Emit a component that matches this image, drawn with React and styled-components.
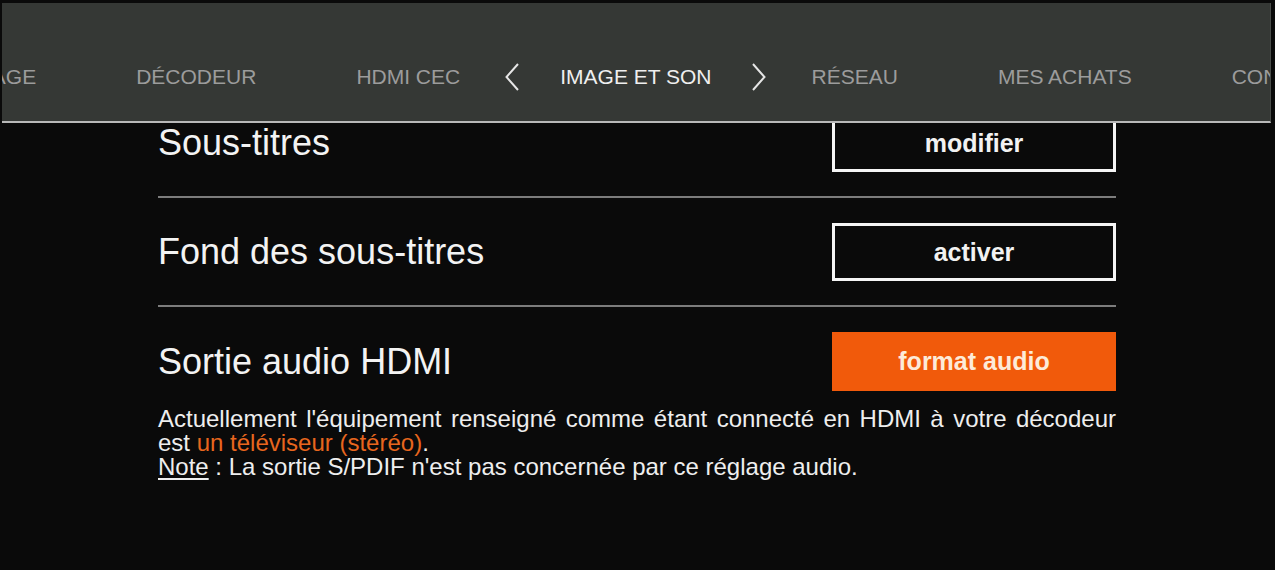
import React from "react";
import styled, { createGlobalStyle } from "styled-components";

const GlobalStyle = createGlobalStyle`
  html, body { margin: 0; padding: 0; background: #0a0a0a; }
  body { font-family: "Liberation Sans", Arial, sans-serif; }
  * { box-sizing: border-box; }
`;

const Screen = styled.div`
  width: 1275px;
  height: 570px;
  display: flex;
  flex-direction: column;
  overflow: hidden;
  background: #0a0a0a;
  padding-top: 3px;
`;

const Header = styled.header`
  flex-shrink: 0;
  height: 120px;
  margin: 0 4px 0 2px;
  background: #353835;
  border-bottom: 2px solid #b8b8b8;
  border-right: 1px solid #4a4d4a;
  overflow: hidden;
  display: flex;
  align-items: center;
  padding-top: 28px;
`;

const TabStrip = styled.nav`
  display: flex;
  align-items: center;
  gap: 100px;
  margin-left: -86px;
  flex-shrink: 0;
`;

const Tab = styled.span`
  position: relative;
  font-size: 21px;
  line-height: 1;
  white-space: nowrap;
  color: ${(p) => (p.$active ? "#efefef" : "#9c9c9c")};
`;

const Chevron = styled.svg`
  position: absolute;
  top: 50%;
  margin-top: -13px;
  width: 14px;
  height: 28px;
  ${(p) => (p.$side === "left" ? "left: -55px;" : "right: -54px;")}
`;

const Viewport = styled.main`
  flex: 1;
  overflow: hidden;
`;

const List = styled.div`
  width: 958px;
  margin: -34px 0 0 158px;
`;

const Row = styled.div`
  display: flex;
  align-items: center;
  justify-content: space-between;
  padding: 25px 0 ${(p) => (p.$last ? "0" : "24px")};
  border-bottom: ${(p) => (p.$last ? "none" : "2px solid #7c7c7c")};
`;

const Label = styled.span`
  font-size: 36px;
  line-height: 1;
  color: #f3f3f3;
`;

const ActionButton = styled.button`
  width: 284px;
  height: ${(p) => (p.$primary ? "59px" : "58px")};
  padding: 0;
  font-family: "Liberation Sans", Arial, sans-serif;
  font-weight: bold;
  font-size: 25px;
  border: 3px solid ${(p) => (p.$primary ? "#f15a0b" : "#f5f5f5")};
  background: ${(p) => (p.$primary ? "#f15a0b" : "transparent")};
  color: ${(p) => (p.$primary ? "#fdebd9" : "#f2f2f2")};
  cursor: pointer;
`;

const Description = styled.p`
  margin: 16px 0 0;
  font-size: 24px;
  line-height: 24px;
  color: #eeeeee;
  text-align: justify;
`;

const Highlight = styled.span`
  color: #e8661e;
`;

const NoteLabel = styled.span`
  text-decoration: underline;
  text-underline-offset: 3px;
`;

const ChevronIcon = ({ side }) => (
  <Chevron $side={side} viewBox="0 0 14 28">
    <polyline
      points={side === "left" ? "13,1 1.5,14 13,27" : "1,1 12.5,14 1,27"}
      fill="none"
      stroke="#e6e6e6"
      strokeWidth="2"
    />
  </Chevron>
);

const tabs = [
  { label: "AFFICHAGE" },
  { label: "DÉCODEUR" },
  { label: "HDMI CEC" },
  { label: "IMAGE ET SON", active: true },
  { label: "RÉSEAU" },
  { label: "MES ACHATS" },
  { label: "CONTRÔLE PARENTAL" },
];

const settings = [
  { label: "Sous-titres", action: "modifier" },
  { label: "Fond des sous-titres", action: "activer" },
  { label: "Sortie audio HDMI", action: "format audio", primary: true },
];

export default function App() {
  return (
    <>
      <GlobalStyle />
      <Screen>
        <Header>
          <TabStrip>
            {tabs.map((t) => (
              <Tab key={t.label} $active={t.active}>
                {t.active && <ChevronIcon side="left" />}
                {t.label}
                {t.active && <ChevronIcon side="right" />}
              </Tab>
            ))}
          </TabStrip>
        </Header>
        <Viewport>
          <List>
            {settings.map((s, i) => (
              <Row key={s.label} $last={i === settings.length - 1}>
                <Label>{s.label}</Label>
                <ActionButton $primary={s.primary}>{s.action}</ActionButton>
              </Row>
            ))}
            <Description>
              Actuellement l'équipement renseigné comme étant connecté en HDMI à
              votre décodeur est <Highlight>un téléviseur (stéréo)</Highlight>.
              <br />
              <NoteLabel>Note</NoteLabel> : La sortie S/PDIF n'est pas concernée
              par ce réglage audio.
            </Description>
          </List>
        </Viewport>
      </Screen>
    </>
  );
}
